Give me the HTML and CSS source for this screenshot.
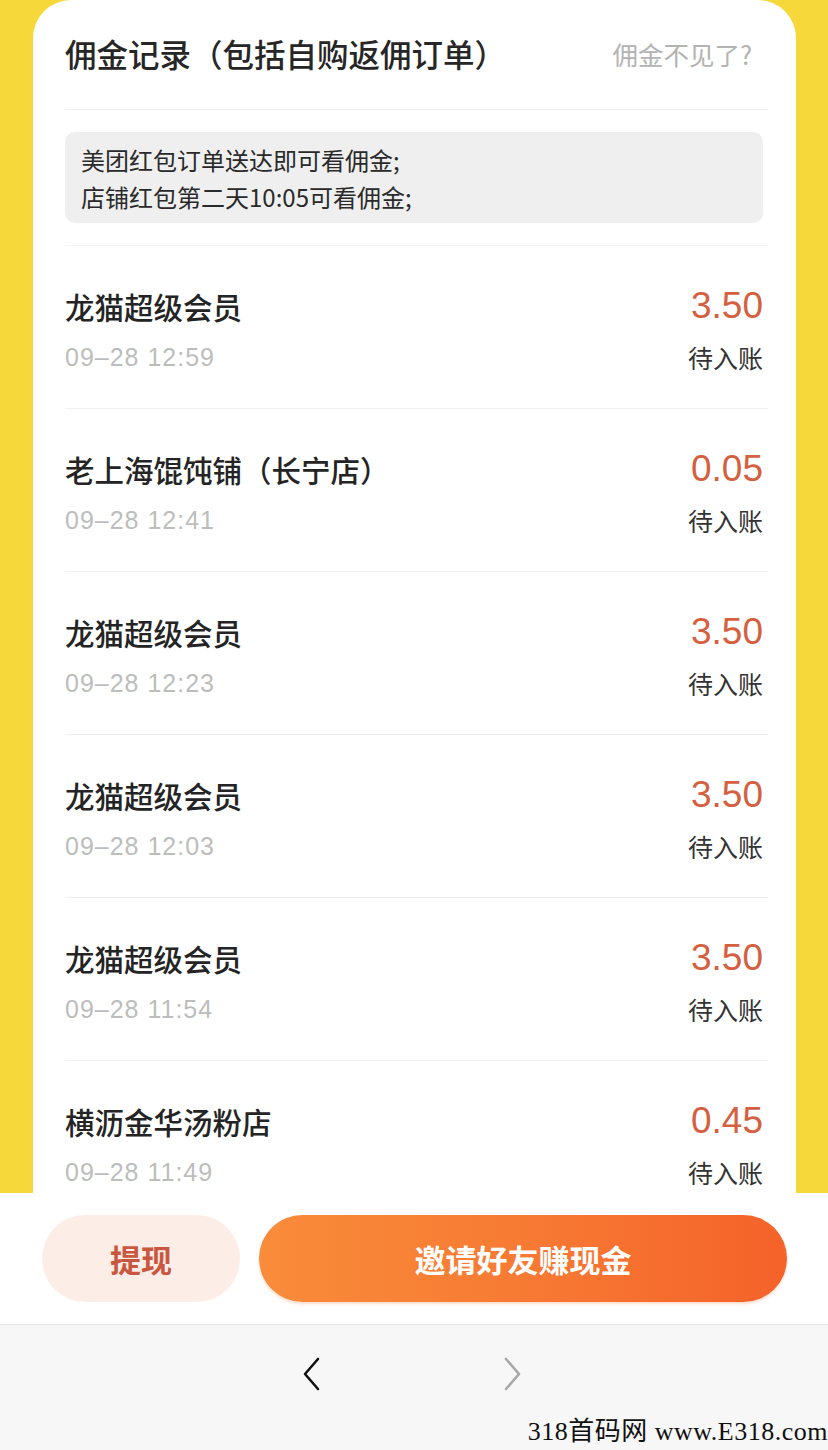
FILE: index.html
```html
<!DOCTYPE html>
<html lang="zh-CN">
<head>
<meta charset="utf-8">
<title>佣金记录</title>
<link rel="stylesheet" href="styles.css">
</head>
<body>
<div class="page">
  <main class="main">
    <section class="card">
      <header class="card-head">
        <h1 class="title">佣金记录（包括自购返佣订单）</h1>
        <a class="help">佣金不见了?</a>
      </header>
      <div class="notice-wrap">
        <div class="notice">
          <p>美团红包订单送达即可看佣金;</p>
          <p>店铺红包第二天10:05可看佣金;</p>
        </div>
      </div>
      <ul class="list">
        <li class="row">
          <div class="left"><div class="name">龙猫超级会员</div><div class="date">09–28 12:59</div></div>
          <div class="right"><div class="amount">3.50</div><div class="status">待入账</div></div>
        </li>
        <li class="row">
          <div class="left"><div class="name">老上海馄饨铺（长宁店）</div><div class="date">09–28 12:41</div></div>
          <div class="right"><div class="amount">0.05</div><div class="status">待入账</div></div>
        </li>
        <li class="row">
          <div class="left"><div class="name">龙猫超级会员</div><div class="date">09–28 12:23</div></div>
          <div class="right"><div class="amount">3.50</div><div class="status">待入账</div></div>
        </li>
        <li class="row">
          <div class="left"><div class="name">龙猫超级会员</div><div class="date">09–28 12:03</div></div>
          <div class="right"><div class="amount">3.50</div><div class="status">待入账</div></div>
        </li>
        <li class="row">
          <div class="left"><div class="name">龙猫超级会员</div><div class="date">09–28 11:54</div></div>
          <div class="right"><div class="amount">3.50</div><div class="status">待入账</div></div>
        </li>
        <li class="row">
          <div class="left"><div class="name">横沥金华汤粉店</div><div class="date">09–28 11:49</div></div>
          <div class="right"><div class="amount">0.45</div><div class="status">待入账</div></div>
        </li>
      </ul>
    </section>
  </main>
  <footer class="actions">
    <button class="btn btn-withdraw">提现</button>
    <button class="btn btn-invite">邀请好友赚现金</button>
  </footer>
  <nav class="navbar">
    <svg class="chev" width="22" height="36" viewBox="0 0 22 36"><path d="M18 3 L5 18 L18 33" fill="none" stroke="#111" stroke-width="2.6" stroke-linecap="round" stroke-linejoin="round"/></svg>
    <svg class="chev" width="22" height="36" viewBox="0 0 22 36"><path d="M4 3 L17 18 L4 33" fill="none" stroke="#a8a8a8" stroke-width="2.6" stroke-linecap="round" stroke-linejoin="round"/></svg>
  </nav>
  <div class="watermark">318首码网 www.E318.com</div>
</div>
</body>
</html>
```

FILE: styles.css
```css
* { box-sizing: border-box; margin: 0; padding: 0; }
html, body { width: 828px; height: 1450px; overflow: hidden; }
body {
  font-family: "Noto Sans CJK SC", "Noto Sans", sans-serif;
  background: #f7f7f7;
  color: #222;
}
.page { position: relative; width: 828px; height: 1450px; display: flex; flex-direction: column; }

.main {
  height: 1193px;
  overflow: hidden;
  background: #f6d83b;
  padding: 0 32px 0 33px;
}
.card {
  background: #fff;
  border-radius: 38px 38px 0 0;
  padding: 0 28px 0 32px;
  min-height: 1300px;
}
.card-head {
  height: 110px;
  display: flex;
  align-items: center;
  justify-content: space-between;
  border-bottom: 1px solid #f1f1f1;
  padding-right: 16px;
  padding-bottom: 3px;
}
.title {
  font-size: 31.5px;
  font-weight: 500;
  color: #262626;
}
.help {
  font-size: 25.5px;
  color: #b3b3b3;
  font-weight: 400;
}

.notice-wrap {
  padding: 22px 5px 22px 0;
  border-bottom: 1px solid #f4f4f4;
}
.notice {
  height: 91px;
  background: #efefef;
  border-radius: 10px;
  padding: 9px 16px 0;
  font-size: 24px;
  line-height: 37px;
  color: #2a2a2a;
}

.list { list-style: none; }
.row {
  height: 163px;
  padding: 40px 5px 31px 0;
  border-bottom: 1px solid #f0f0f0;
  display: flex;
  justify-content: space-between;
}
.left, .right { display: flex; flex-direction: column; gap: 11px; }
.right { align-items: flex-end; }
.name {
  height: 40px;
  line-height: 40px;
  font-size: 29.5px;
  font-weight: 500;
  color: #242424;
}
.date {
  height: 40px;
  line-height: 40px;
  font-family: "Liberation Sans", Arial, sans-serif;
  font-size: 25px;
  letter-spacing: 1px;
  color: #bdbdbd;
}
.amount {
  height: 40px;
  line-height: 40px;
  font-family: "Liberation Sans", Arial, sans-serif;
  font-size: 37px;
  color: #d5603f;
}
.status {
  height: 40px;
  line-height: 40px;
  font-size: 25px;
  color: #333;
}

.actions {
  height: 132px;
  background: #fff;
  border-bottom: 1px solid #e4e4e4;
  display: flex;
  align-items: flex-start;
  padding: 22px 41px 0 42px;
  gap: 19px;
}
.btn {
  height: 87px;
  border: none;
  border-radius: 44px;
  font-family: "Noto Sans CJK SC", sans-serif;
  font-size: 31px;
  font-weight: 700;
}
.btn-withdraw {
  width: 198px;
  background: #fdede7;
  color: #c9573f;
}
.btn-invite {
  flex: 1;
  background: linear-gradient(90deg, #f98c3a 0%, #f77a33 50%, #f5622a 100%);
  color: #fff;
  box-shadow: 0 2px 3px rgba(245, 120, 50, 0.25);
}

.navbar {
  flex: 1;
  background: #f7f7f7;
  display: flex;
  justify-content: center;
  align-items: flex-start;
  padding-top: 31px;
  gap: 180px;
  padding-right: 4px;
}
.chev { display: block; }

.watermark {
  position: absolute;
  right: 0;
  bottom: 2px;
  font-family: "Liberation Serif", "Noto Sans CJK SC", serif;
  font-size: 26px;
  line-height: 32px;
  color: #111;
  letter-spacing: 0.5px;
  white-space: nowrap;
}
```
